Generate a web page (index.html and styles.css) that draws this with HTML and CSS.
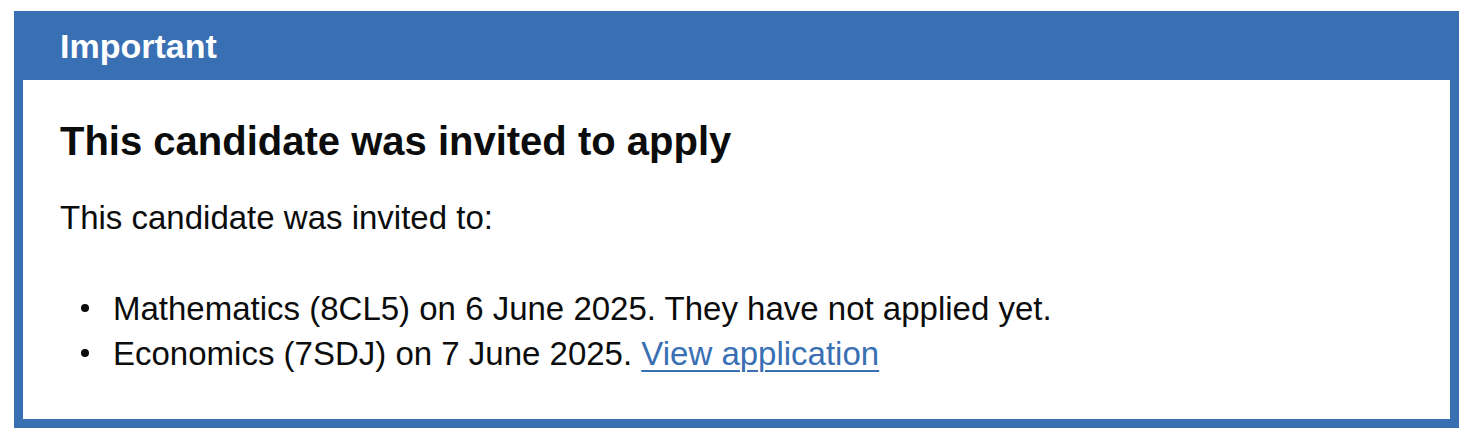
FILE: index.html
```html
<!DOCTYPE html>
<html lang="en">
<head>
<meta charset="utf-8">
<title>Important</title>
<link rel="stylesheet" href="styles.css">
</head>
<body>
<div class="page">
  <div class="banner" role="region" aria-labelledby="banner-title">
    <div class="banner-header">
      <h2 class="banner-title" id="banner-title">Important</h2>
    </div>
    <div class="banner-content">
      <h3 class="banner-heading">This candidate was invited to apply</h3>
      <p class="body">This candidate was invited to:</p>
      <ul class="bullets">
        <li>Mathematics (8CL5) on 6 June 2025. They have not applied yet.</li>
        <li>Economics (7SDJ) on 7 June 2025.&nbsp;<a class="link" href="#">View application</a></li>
      </ul>
    </div>
  </div>
</div>
</body>
</html>
```
FILE: styles.css
```css
html, body {
  margin: 0;
  padding: 0;
  background: #ffffff;
}

.page {
  padding: 11px 9px 14px 14px;
  font-family: "Liberation Sans", Arial, sans-serif;
  color: #0b0c0c;
}

.banner {
  border: 9px solid #3970b4;
  border-top: 0;
  background: #3970b4;
}

.banner-header {
  padding: 12px 37px 11px 37px;
}

.banner-title {
  margin: 0;
  font-size: 34px;
  line-height: 46px;
  font-weight: 700;
  color: #ffffff;
}

.banner-content {
  background: #ffffff;
  padding: 36px 37px 43px 37px;
}

.banner-heading {
  margin: 0 0 29px 0;
  font-size: 40px;
  line-height: 50px;
  font-weight: 700;
}

.body {
  margin: 0 0 46px 0;
  font-size: 33px;
  line-height: 45px;
}

.bullets {
  list-style: none;
  margin: 0;
  padding: 0;
  font-size: 33px;
  line-height: 45px;
}

.bullets li {
  display: flex;
  align-items: flex-start;
}

.bullets li::before {
  content: "";
  flex: 0 0 8px;
  width: 8px;
  height: 8px;
  margin: 18px 24px 0 21px;
  border-radius: 50%;
  background: #0b0c0c;
}

.link {
  color: #3970b4;
  text-decoration: underline;
  text-decoration-thickness: 2px;
  text-underline-offset: 5px;
}
```
